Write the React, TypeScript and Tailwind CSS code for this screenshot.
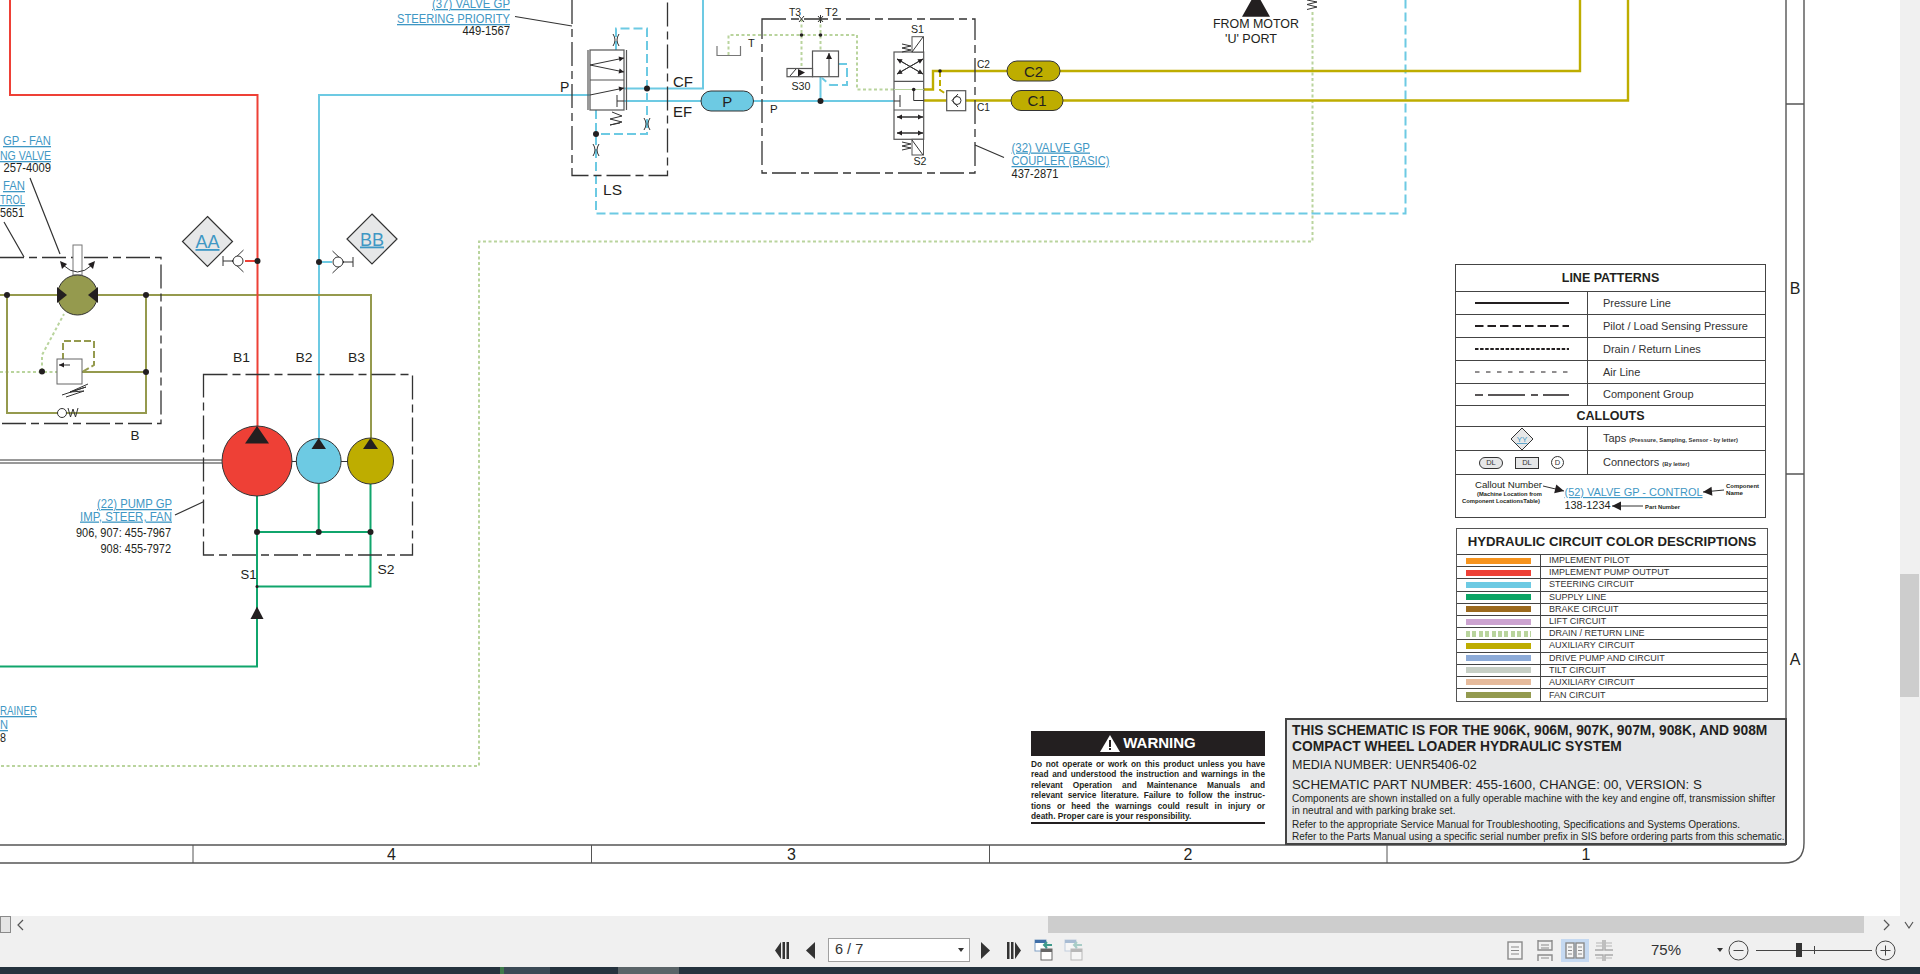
import type { ReactNode } from 'react';

const INK = '#333333';
const RED = '#ee4036';
const BLUE = '#6dcae3';
const GREEN = '#10a56c';
const OLIVE = '#959a4e';
const YELLOW = '#bead00';
const DRAIN = '#b9d49d';
const LINK = '#3f97c4';
const GROUP_DASH = '24 5 8 5';

function T({ x, y, s = 13, w, link, bold, fill, anchor, children }: { x: number; y: number; s?: number; w?: number; link?: boolean; bold?: boolean; fill?: string; anchor?: 'middle' | 'end'; children: ReactNode }) {
  return (
    <text
      x={x}
      y={y}
      fontSize={s}
      textLength={w}
      lengthAdjust={w ? 'spacingAndGlyphs' : undefined}
      textAnchor={anchor}
      fontWeight={bold ? 700 : 400}
      fill={fill ?? (link ? LINK : '#231f20')}
      className={link ? 'underline' : undefined}
    >
      {children}
    </text>
  );
}

function Dot({ x, y, r = 3 }: { x: number; y: number; r?: number }) {
  return <circle cx={x} cy={y} r={r} fill="#231f20" />;
}

function P({ d, c = INK, w = 1, dash }: { d: string; c?: string; w?: number; dash?: string }) {
  return <path d={d} fill="none" stroke={c} strokeWidth={w} strokeDasharray={dash} />;
}

function Arrow({ x1, y1, x2, y2, size = 5 }: { x1: number; y1: number; x2: number; y2: number; size?: number }) {
  const a = Math.atan2(y2 - y1, x2 - x1);
  const h = size * 0.5;
  const bx = x2 - Math.cos(a) * size;
  const by = y2 - Math.sin(a) * size;
  const pts = `${x2},${y2} ${bx - Math.sin(a) * h},${by + Math.cos(a) * h} ${bx + Math.sin(a) * h},${by - Math.cos(a) * h}`;
  return (
    <>
      <line x1={x1} y1={y1} x2={x2} y2={y2} stroke={INK} strokeWidth={1} />
      <polygon points={pts} fill="#231f20" />
    </>
  );
}

function Orifice({ x, y }: { x: number; y: number }) {
  return <P d={`M${x - 3} ${y - 6}Q${x + 1} ${y} ${x - 3} ${y + 6}M${x + 3} ${y - 6}Q${x - 1} ${y} ${x + 3} ${y + 6}`} />;
}

function Pill({ x, y, w, h, fill, label }: { x: number; y: number; w: number; h: number; fill: string; label: string }) {
  return (
    <>
      <rect x={x} y={y} width={w} height={h} rx={h / 2} fill={fill} stroke={INK} strokeWidth={1} />
      <T x={x + w / 2} y={y + h / 2 + 5.5} s={15} anchor="middle">{label}</T>
    </>
  );
}

function Diamond({ x, y, label }: { x: number; y: number; label: string }) {
  return (
    <>
      <polygon points={`${x},${y - 25} ${x + 25},${y} ${x},${y + 25} ${x - 25},${y}`} fill="#e6e7e8" stroke={INK} strokeWidth={1.2} />
      <T x={x} y={y + 6.5} s={18} link anchor="middle">{label}</T>
    </>
  );
}

function Schematic() {
  return (
    <svg className="absolute inset-0 h-full w-full" viewBox="0 0 1900 916">
      {/* sheet frame */}
      <P d="M0 845H1786M0 863H1784Q1804 863 1804 843V0M1786 0V845M1786 104H1804M1786 474H1804" c="#555555" w={1.4} />
      <P d="M193 845V863M591.5 845V863M989.5 845V863M1387 845V863" c="#555555" w={1} />
      <T x={391.5} y={860} s={16} anchor="middle">4</T>
      <T x={791.5} y={860} s={16} anchor="middle">3</T>
      <T x={1188} y={860} s={16} anchor="middle">2</T>
      <T x={1586} y={860} s={16} anchor="middle">1</T>
      <T x={1795} y={294} s={16} anchor="middle">B</T>
      <T x={1795} y={665} s={16} anchor="middle">A</T>

      {/* drain / return */}
      <P d="M1312.5 12V241.5H479V766H0" c={DRAIN} w={2} dash="3 2.5" />
      <P d="M0 372H57M42 371V355L64 314" c={DRAIN} w={2} dash="3 2.5" />
      <P d="M728.5 55V35H857V89.5H894M801.5 19V68M820.5 19V51" c={DRAIN} w={2} dash="3 2.5" />

      {/* steering */}
      <P d="M319 440V95H590" c={BLUE} w={2} />
      <P d="M624 88.5H703V0M617 101H702M753 101H894M820.5 101V77" c={BLUE} w={2} />
      <P d="M616 50V28.5H647V134H596M596 110V213.5H1405.5V0" c={BLUE} w={2} dash="9 4" />
      <P d="M838 64H847V85H830L822 78" c={BLUE} w={2} dash="9 4" />

      {/* fan */}
      <P d="M0 295H371V438M7 295V413H146V295M82 372H146" c={OLIVE} w={2} />
      <P d="M63 360V341H94V365L82 372" c={OLIVE} w={2} dash="7 3" />

      {/* implement */}
      <P d="M10 0V95H257.5V430M245 261H257.5" c={RED} w={2} />

      {/* supply */}
      <P d="M0 666.5H257V496M318.7 483V532M370.5 484V586.5H257M257 532H370.5" c={GREEN} w={2} />

      {/* auxiliary */}
      <P d="M1060 71H1580V0M1063 100.5H1628V0M923.5 100.5H1011M923.5 89.5H933V71H1007" c={YELLOW} w={2.4} />
      <P d="M940 71V90L952 98" c={YELLOW} w={2} dash="6 3" />

      {/* component groups */}
      <P d="M0 257.5H161V423.5H0" w={1.3} dash={GROUP_DASH} />
      <P d="M572 0V175.5H667.5V0" w={1.3} dash={GROUP_DASH} />
      <P d="M762 19H975V173H762Z" w={1.3} dash={GROUP_DASH} />
      <P d="M203.5 374.5H412.5V555H203.5Z" w={1.3} dash={GROUP_DASH} />
      <P d="M30 178L60 254M4 222L24 257M515 16.5L572 26M975 145L1004 157.5M175 515L204 501.5" w={1.2} />

      {/* fan motor */}
      <rect x={73} y={245} width={9} height={30} fill="#ffffff" stroke="#777777" />
      <P d="M63 265Q77.5 279 92 265" />
      <polygon points="60,261 67,264 62,269" fill="#231f20" />
      <polygon points="95,261 88,264 93,269" fill="#231f20" />
      <circle cx={77.5} cy={295} r={20} fill={OLIVE} stroke={INK} />
      <polygon points="57,287 67,295 57,303" fill="#231f20" />
      <polygon points="98,287 88,295 98,303" fill="#231f20" />
      <Dot x={7} y={295} />
      <Dot x={146} y={295} />
      <Dot x={146} y={372} />
      <Dot x={42} y={371.5} />
      <rect x={57} y={359} width={25} height={25} fill="#ffffff" stroke="#666666" />
      <Arrow x1={70} y1={365} x2={59} y2={365} size={5} />
      <P d="M62 395L86 387L70 392L88 384M70 392L84 391L66 397" />
      <circle cx={62} cy={413} r={4.5} fill="#ffffff" stroke={INK} />
      <P d="M68 408L70.5 417L73 409L75.5 417L78 408" />

      {/* taps */}
      <Diamond x={207.5} y={241.5} label="AA" />
      <Diamond x={372} y={239} label="BB" />
      <P d="M223 256V266M223 261H233M243.5 250L232 261L243.5 272" />
      <circle cx={238} cy={261} r={5} fill="#ffffff" stroke={INK} />
      <Dot x={257.5} y={261} />
      <P d="M319 262H332" c={BLUE} w={2} />
      <P d="M353 257V267M343 262H353M332.5 251L344 262L332.5 273" />
      <circle cx={338} cy={262} r={5} fill="#ffffff" stroke={INK} />
      <Dot x={319} y={262} />

      {/* pumps */}
      <P d="M0 460H222M0 463H222M292 461.5H296M341 461.5H348" c={INK} w={1} />
      <circle cx={257} cy={461} r={35} fill={RED} stroke={INK} />
      <polygon points="257,426 269,443.5 245,443.5" fill="#231f20" />
      <circle cx={318.7} cy={461} r={22.4} fill={BLUE} stroke={INK} />
      <polygon points="318.7,438 326,449 311.5,449" fill="#231f20" />
      <circle cx={370.5} cy={461} r={23} fill={YELLOW} stroke={INK} />
      <polygon points="370.5,438 378,449 363,449" fill="#231f20" />
      <Dot x={257} y={532} />
      <Dot x={318.7} y={532} />
      <Dot x={370.5} y={532} />
      <Dot x={257} y={586.5} r={1.5} />
      <polygon points="257,606.5 263.5,619 250.5,619" fill="#231f20" />

      {/* steering priority valve */}
      <rect x={590} y={50} width={34} height={60} fill="#ffffff" stroke="#555555" strokeWidth={1.2} />
      <P d="M588 50V110M626.5 50V110M590 80H624" c="#555555" w={1.2} />
      <Arrow x1={590} y1={65} x2={624} y2={58} />
      <Arrow x1={590} y1={65} x2={624} y2={72} />
      <Arrow x1={590} y1={95} x2={624} y2={88} />
      <P d="M617 95V107M617 101H624" />
      <P d="M612 112L622 116L610 119L622 122L610 125L620 123" />
      <Orifice x={616} y={40} />
      <Orifice x={647} y={124} />
      <Orifice x={596} y={150} />
      <Dot x={647} y={88.5} />
      <Dot x={596} y={134} />

      {/* coupler valve */}
      <P d="M717 46V55.5H740.5V46" c="#777777" w={1.2} />
      <T x={748} y={46.5} s={11}>T</T>
      <P d="M799 16L804 22M804 16L799 22M818 16L823 22M823 16L818 22M820.5 15V23" />
      <Dot x={801.5} y={35} r={1.8} />
      <Dot x={820.5} y={35} r={1.8} />
      <rect x={812.5} y={51} width={26} height={25.7} fill="#ffffff" stroke="#555555" strokeWidth={1.2} />
      <Arrow x1={829} y1={76} x2={829} y2={53} size={6} />
      <rect x={787} y={68.5} width={25.5} height={8.2} fill="#ffffff" stroke="#555555" strokeWidth={1.2} />
      <P d="M790 76L796 69" />
      <polygon points="798,69 805,72.5 798,76.5" fill="#231f20" />
      <Dot x={820.5} y={101} />
      <rect x={894} y={52} width={29.7} height={87.3} fill="#ffffff" stroke="#555555" strokeWidth={1.2} />
      <P d="M894 81.3H923.7M894 110H923.7" c="#555555" w={1.2} />
      <Arrow x1={897} y1={59} x2={923} y2={74} />
      <Arrow x1={923} y1={74} x2={897} y2={59} />
      <Arrow x1={923} y1={59} x2={897} y2={74} />
      <Arrow x1={897} y1={74} x2={923} y2={59} />
      <Arrow x1={897} y1={117} x2={923} y2={117} />
      <Arrow x1={923} y1={117} x2={897} y2={117} />
      <Arrow x1={897} y1={133} x2={923} y2={133} />
      <Arrow x1={923} y1={133} x2={897} y2={133} />
      <P d="M894 101H900M900 95V107M913.7 89.5V100.5H923.7" />
      <P d="M894 89.5H923.7" c={DRAIN} w={1} />
      <Dot x={913.7} y={89.5} r={1.8} />
      <rect x={912} y={36.7} width={11.5} height={15.3} fill="#ffffff" stroke="#555555" />
      <rect x={912} y={139.3} width={11.5} height={15.7} fill="#ffffff" stroke="#555555" />
      <P d="M912 52L923 37M912 140L923 155" />
      <P d="M902 44L911 46L902 48L911 50L902 52M902 142L911 144L902 146L911 148L902 150" />
      <rect x={946.7} y={90.7} width={19} height={20} fill="#ffffff" stroke="#555555" strokeWidth={1.2} />
      <circle cx={957} cy={100.5} r={4} fill="#ffffff" stroke={INK} />
      <P d="M958 94L952 100.5L958 107" />
      <Dot x={940} y={71} r={1.8} />

      <Pill x={701} y={91} w={52.5} h={20} fill={BLUE} label="P" />
      <Pill x={1007} y={61} w={53} h={20} fill={YELLOW} label="C2" />
      <Pill x={1011} y={90.5} w={52} h={20} fill={YELLOW} label="C1" />

      {/* labels */}
      <T x={560} y={92} s={14}>P</T>
      <T x={673} y={87} s={14.5} w={20}>CF</T>
      <T x={673} y={117} s={14.5} w={19}>EF</T>
      <T x={603} y={195} s={14} w={19}>LS</T>
      <T x={789} y={16} s={11.5} w={12}>T3</T>
      <T x={825} y={16} s={11.5} w={13}>T2</T>
      <T x={791.5} y={90} s={11.5} w={19}>S30</T>
      <T x={770} y={113} s={11.5}>P</T>
      <T x={911} y={33} s={11.5} w={13}>S1</T>
      <T x={913.5} y={165} s={11.5} w={13}>S2</T>
      <T x={977} y={68} s={11.5} w={13}>C2</T>
      <T x={977} y={110.5} s={11.5} w={13}>C1</T>
      <T x={233} y={361.5} s={13.5} w={17}>B1</T>
      <T x={295.5} y={361.5} s={13.5} w={17}>B2</T>
      <T x={348} y={361.5} s={13.5} w={17}>B3</T>
      <T x={130.5} y={440} s={13.5}>B</T>
      <T x={240.5} y={579} s={13.5} w={16}>S1</T>
      <T x={377.5} y={574} s={13.5} w={17}>S2</T>

      {/* from motor */}
      <polygon points="1256,-8 1270,16.7 1242,16.7" fill="#231f20" />
      <T x={1213} y={27.5} s={13} w={86}>FROM MOTOR</T>
      <T x={1225} y={42.5} s={13} w={52}>'U' PORT</T>
      <P d="M1307 0L1317 2L1307 4.5L1317 7L1307 9.5" />

      {/* callouts */}
      <T x={432} y={8} s={13} w={78} link>(37) VALVE GP</T>
      <T x={397} y={23} s={13} w={113} link>STEERING PRIORITY</T>
      <T x={462.5} y={35} s={13.5} w={47.5}>449-1567</T>
      <T x={1011.5} y={151.5} s={13} w={78.5} link>(32) VALVE GP</T>
      <T x={1011.5} y={165} s={13} w={98} link>COUPLER (BASIC)</T>
      <T x={1011.5} y={178} s={13.5} w={47}>437-2871</T>
      <T x={3} y={145} s={13} w={48} link>GP - FAN</T>
      <T x={0} y={160} s={13} w={51} link>NG VALVE</T>
      <T x={3.5} y={172} s={13.5} w={47.5}>257-4009</T>
      <T x={3} y={190} s={13} w={22} link>FAN</T>
      <T x={0} y={204} s={13} w={25} link>TROL</T>
      <T x={0} y={217} s={13.5} w={24}>5651</T>
      <T x={97} y={508} s={13} w={75} link>(22) PUMP GP</T>
      <T x={80} y={520.5} s={13} w={92} link>IMP, STEER, FAN</T>
      <T x={76} y={537} s={13.5} w={95}>906, 907: 455-7967</T>
      <T x={100.5} y={552.5} s={13.5} w={70.5}>908: 455-7972</T>
      <T x={0} y={715} s={13} w={37} link>RAINER</T>
      <T x={0} y={729} s={13} w={8} link>N</T>
      <T x={0} y={741.5} s={13.5} w={6}>8</T>
    </svg>
  );
}

function Sample({ dash, w = 1 }: { dash?: string; w?: number }) {
  return (
    <svg width="94" height="4" className="block">
      <line x1="0" y1="2" x2="94" y2="2" stroke="#231f20" strokeWidth={w} strokeDasharray={dash} />
    </svg>
  );
}

function PatternRow({ h, dash, w, label }: { h: string; dash?: string; w: number; label: string }) {
  return (
    <div className={`flex ${h} items-center border-b border-[#444444]`}>
      <div className="flex h-full w-[132px] items-center justify-center border-r border-[#444444]">
        <Sample dash={dash} w={w} />
      </div>
      <span className="pl-[15px] text-[11px] text-[#333333]">{label}</span>
    </div>
  );
}

function LinePatterns() {
  return (
    <div className="absolute left-[1455px] top-[264px] w-[311px] border border-[#444444] bg-white">
      <div className="flex h-[27px] items-center justify-center border-b border-[#444444] text-[12.5px] font-bold text-[#231f20]">LINE PATTERNS</div>
      <PatternRow h="h-[23px]" w={2} label="Pressure Line" />
      <PatternRow h="h-[23px]" dash="8.5 4" w={2} label="Pilot / Load Sensing Pressure" />
      <PatternRow h="h-[23px]" dash="3.5 1.6" w={2} label="Drain / Return Lines" />
      <PatternRow h="h-[23px]" dash="4.5 6.5" w={1} label="Air Line" />
      <PatternRow h="h-[22px]" dash="8 5 37 6 7 5 26" w={1.3} label="Component Group" />
      <div className="flex h-[21px] items-center justify-center border-b border-[#444444] text-[12.5px] font-bold text-[#231f20]">CALLOUTS</div>
      <div className="flex h-[24px] items-center border-b border-[#444444]">
        <div className="flex h-full w-[132px] items-center justify-center border-r border-[#444444]">
          <svg width="24" height="24" viewBox="0 0 24 24">
            <polygon points="12,1 23,12 12,23 1,12" fill="#e6e7e8" stroke="#333333" />
            <text x="12" y="15" fontSize="8" textAnchor="middle" fill={LINK} className="underline">YY</text>
          </svg>
        </div>
        <span className="pl-[15px] text-[11px] text-[#333333]">Taps <span className="text-[5.8px] font-bold">(Pressure, Sampling, Sensor - by letter)</span></span>
      </div>
      <div className="flex h-[24px] items-center border-b border-[#444444]">
        <div className="flex h-full w-[132px] items-center gap-[12px] border-r border-[#444444] pl-[23px] text-[7.5px] text-[#333333]">
          <span className="flex h-[12px] w-[24px] items-center justify-center rounded-full border border-[#333333] bg-[#e6e7e8]">DL</span>
          <span className="flex h-[12px] w-[24px] items-center justify-center border border-[#333333] bg-[#e6e7e8]">DL</span>
          <span className="flex h-[13px] w-[13px] items-center justify-center rounded-full border border-[#333333]">D</span>
        </div>
        <span className="pl-[15px] text-[11px] text-[#333333]">Connectors <span className="text-[5.8px] font-bold">(By letter)</span></span>
      </div>
      <svg className="block" width="309" height="42" viewBox="1456 476 309 42">
        <T x={1475} y={489} s={9.5} w={67}>Callout Number</T>
        <T x={1477} y={497} s={5.4} bold w={65}>(Machine Location from</T>
        <T x={1462} y={504} s={5.4} bold w={78}>Component LocationsTable)</T>
        <T x={1564.5} y={497} s={11.5} w={138} link>(52) VALVE GP - CONTROL</T>
        <T x={1564.5} y={510} s={11} w={46}>138-1234</T>
        <T x={1726} y={489} s={5.4} bold w={33}>Component</T>
        <T x={1726} y={496} s={5.4} bold w={17}>Name</T>
        <T x={1645} y={510} s={5.4} bold w={35}>Part Number</T>
        <Arrow x1={1543} y1={487} x2={1564} y2={492} size={9} />
        <Arrow x1={1724} y1={491} x2={1703} y2={493} size={9} />
        <Arrow x1={1643} y1={507} x2={1612} y2={507} size={9} />
      </svg>
    </div>
  );
}

const CIRCUITS = [
  { label: 'IMPLEMENT PILOT', swatch: 'bg-[#f7941d]' },
  { label: 'IMPLEMENT PUMP OUTPUT', swatch: 'bg-[#ee4036]' },
  { label: 'STEERING CIRCUIT', swatch: 'bg-[#6dcae3]' },
  { label: 'SUPPLY LINE', swatch: 'bg-[#0ca566]' },
  { label: 'BRAKE CIRCUIT', swatch: 'bg-[#9c6a1e]' },
  { label: 'LIFT CIRCUIT', swatch: 'bg-[#cca3d0]' },
  { label: 'DRAIN / RETURN LINE', swatch: 'bg-[repeating-linear-gradient(90deg,#b9d49d_0,#b9d49d_4px,#ffffff_4px,#ffffff_6.4px)]' },
  { label: 'AUXILIARY CIRCUIT', swatch: 'bg-[#bead00]' },
  { label: 'DRIVE PUMP AND CIRCUIT', swatch: 'bg-[#8dabd8]' },
  { label: 'TILT CIRCUIT', swatch: 'bg-[#c7cfc5]' },
  { label: 'AUXILIARY CIRCUIT', swatch: 'bg-[#e6bb9c]' },
  { label: 'FAN CIRCUIT', swatch: 'bg-[#939a4f]' },
];

function CircuitColors() {
  return (
    <div className="absolute left-[1456px] top-[528px] w-[312px] border border-[#555555] bg-white">
      <div className="flex h-[26px] items-center justify-center border-b border-[#444444] text-[13.2px] font-bold text-[#231f20]">HYDRAULIC CIRCUIT COLOR DESCRIPTIONS</div>
      {CIRCUITS.map((c) => (
        <div key={c.label + c.swatch} className="flex h-[12.2px] items-center border-b border-[#444444] last:border-b-0">
          <div className="flex h-full w-[84px] items-center border-r border-[#444444] pl-[9px]">
            <div className={`h-[6px] w-[65px] ${c.swatch}`} />
          </div>
          <span className="pl-[8px] text-[9px] leading-none text-[#333333]">{c.label}</span>
        </div>
      ))}
    </div>
  );
}

function Warning() {
  const lines = [
    'Do not operate or work on this product unless you have',
    'read and understood the instruction and warnings in the',
    'relevant Operation and Maintenance Manuals and',
    'relevant service literature. Failure to follow the instruc-',
    'tions or heed the warnings could result in injury or',
  ];
  return (
    <div className="absolute left-[1031px] top-[731px] w-[234px] border-b-2 border-[#231f20] pb-[1px]">
      <div className="mb-[3px] flex h-[25px] items-center justify-center gap-[3px] bg-[#231f20] text-[15px] font-bold text-white">
        <svg width="20" height="17" viewBox="0 0 20 17">
          <polygon points="10,0 20,17 0,17" fill="#ffffff" />
          <rect x="9" y="5" width="2" height="7" fill="#231f20" />
          <rect x="9" y="13" width="2" height="2" fill="#231f20" />
        </svg>
        WARNING
      </div>
      {lines.map((l) => (
        <div key={l} className="text-justify text-[8.3px] font-bold leading-[10.4px] text-[#231f20] [text-align-last:justify]">{l}</div>
      ))}
      <div className="text-[8.3px] font-bold leading-[10.4px] text-[#231f20]">death. Proper care is your responsibility.</div>
    </div>
  );
}

function TitleBlock() {
  return (
    <div className="absolute left-[1285px] top-[718px] h-[127px] w-[502px] border-2 border-[#444444] bg-[#e6e7e8] pl-[5px] pt-[3px] text-[#231f20]">
      <div className="whitespace-nowrap text-[13.8px] font-bold leading-[16px]">THIS SCHEMATIC IS FOR THE 906K, 906M, 907K, 907M, 908K, AND 908M</div>
      <div className="whitespace-nowrap text-[13.8px] font-bold leading-[16px]">COMPACT WHEEL LOADER HYDRAULIC SYSTEM</div>
      <div className="mt-[1px] text-[12.5px] leading-[18px]">MEDIA NUMBER: UENR5406-02</div>
      <div className="mt-[1px] whitespace-nowrap text-[13.3px] leading-[20px]">SCHEMATIC PART NUMBER: 455-1600, CHANGE: 00, VERSION: S</div>
      <div className="-mt-[2px] whitespace-nowrap text-[10px] leading-[12px]">Components are shown installed on a fully operable machine with the key and engine off, transmission shifter</div>
      <div className="text-[10px] leading-[12px]">in neutral and with parking brake set.</div>
      <div className="mt-[2px] whitespace-nowrap text-[10px] leading-[12px]">Refer to the appropriate Service Manual for Troubleshooting, Specifications and Systems Operations.</div>
      <div className="whitespace-nowrap text-[10px] leading-[12px]">Refer to the Parts Manual using a specific serial number prefix in SIS before ordering parts from this schematic.</div>
    </div>
  );
}

function Chevron({ dir }: { dir: 'left' | 'right' | 'down' }) {
  const d = dir === 'left' ? 'M7 1L2 6L7 11' : dir === 'right' ? 'M2 1L7 6L2 11' : 'M1 3L5 9L9 3';
  return (
    <svg width="10" height="12" viewBox="0 0 10 12">
      <path d={d} fill="none" stroke="#555555" strokeWidth="1.2" />
    </svg>
  );
}

function NavIcon({ kind }: { kind: 'first' | 'prev' | 'next' | 'last' }) {
  const shape = {
    first: 'M0 8.5L6 0V17ZM7.5 0H10V17H7.5ZM11.5 0H14V17H11.5Z',
    prev: 'M0 8.5L9 0V17Z',
    next: 'M9 8.5L0 0V17Z',
    last: 'M0 0H2.5V17H0ZM4 0H6.5V17H4ZM14 8.5L8 0V17Z',
  }[kind];
  return (
    <svg width={kind === 'first' || kind === 'last' ? 14 : 9} height="17" viewBox={kind === 'first' || kind === 'last' ? '0 0 14 17' : '0 0 9 17'}>
      <path d={shape} fill="#333333" />
    </svg>
  );
}

function SwapIcon({ muted }: { muted?: boolean }) {
  return (
    <svg width="20" height="22" viewBox="0 0 20 22" className={muted ? 'opacity-40' : ''}>
      <rect x="1" y="1" width="11" height="11" fill="#ffffff" stroke="#7f9fc4" />
      <rect x="1" y="1" width="11" height="3" fill="#3f6fa8" />
      <rect x="7" y="10" width="11" height="11" fill="#ffffff" stroke="#666666" />
      <rect x="7" y="10" width="11" height="3" fill="#666666" />
      <path d="M18 6H10M13 3L10 6L13 9" fill="none" stroke="#3f9b8c" strokeWidth="2" />
    </svg>
  );
}

function PageIcon({ kind }: { kind: 'single' | 'scroll' | 'double' | 'cont' }) {
  const s = '#8a8a8a';
  if (kind === 'single') {
    return (
      <svg width="16" height="19" viewBox="0 0 16 19">
        <rect x="1" y="1" width="14" height="17" fill="#f4f4f4" stroke={s} strokeWidth="1.4" />
        <path d="M4 6H12M4 9.5H12M4 13H12" stroke={s} />
      </svg>
    );
  }
  if (kind === 'scroll') {
    return (
      <svg width="16" height="21" viewBox="0 0 16 21">
        <path d="M1 0V10H15V0M1 21V15H15V21M1 1H15" fill="none" stroke={s} strokeWidth="1.4" />
        <path d="M4 5H12M4 8H12M4 18H12" stroke={s} />
      </svg>
    );
  }
  if (kind === 'double') {
    return (
      <span className="flex h-[23px] w-[28px] items-center justify-center bg-[#c5d9f1]">
        <svg width="20" height="17" viewBox="0 0 20 17">
          <rect x="1" y="1" width="8" height="15" fill="#f4f4f4" stroke={s} strokeWidth="1.4" />
          <rect x="11" y="1" width="8" height="15" fill="#f4f4f4" stroke={s} strokeWidth="1.4" />
          <path d="M3 5H7M3 8.5H7M3 12H7M13 5H17M13 8.5H17M13 12H17" stroke={s} />
        </svg>
      </span>
    );
  }
  return (
    <svg width="20" height="21" viewBox="0 0 20 21">
      <path d="M1 10H9V0M11 0V10H19M1 15H9V21M11 21V15H19" fill="none" stroke="#a9a9a9" strokeWidth="1.4" />
      <path d="M2 3H8M2 6H8M12 3H18M12 6H18M2 18H8M12 18H18" stroke="#b5b5b5" />
    </svg>
  );
}

function ZoomButton({ plus }: { plus?: boolean }) {
  return (
    <svg width="21" height="21" viewBox="0 0 21 21">
      <circle cx="10.5" cy="10.5" r="9.5" fill="none" stroke="#444444" />
      <path d={plus ? 'M5.5 10.5H15.5M10.5 5.5V15.5' : 'M5.5 10.5H15.5'} stroke="#444444" />
    </svg>
  );
}

export default function App() {
  return (
    <div className="flex h-screen w-screen flex-col overflow-hidden bg-white font-['Liberation_Sans',Arial,sans-serif]">
      <div className="flex h-[916px] shrink-0">
        <div className="relative w-[1900px] shrink-0 overflow-hidden bg-white">
          <Schematic />
          <LinePatterns />
          <CircuitColors />
          <Warning />
          <TitleBlock />
        </div>
        <div className="flex-1 bg-[#f0f0f0] pt-[574px]">
          <div className="h-[123px] w-[19px] bg-[#cdcdcd]" />
        </div>
      </div>

      {/* horizontal scrollbar */}
      <div className="flex h-[17px] shrink-0 items-center bg-[#f0f0f0]">
        <div className="h-full w-[11px] border border-[#8a8a8a] bg-[#e4e4e4]" />
        <div className="ml-[5px]"><Chevron dir="left" /></div>
        <div className="ml-[1022px] h-full w-[816px] bg-[#cdcdcd]" />
        <div className="ml-[18px]"><Chevron dir="right" /></div>
        <div className="ml-[12px]"><Chevron dir="down" /></div>
      </div>

      {/* toolbar */}
      <div className="flex h-[34px] shrink-0 items-center bg-[#f0f0f0] text-[#333333]">
        <div className="ml-[775px]"><NavIcon kind="first" /></div>
        <div className="ml-[17px]"><NavIcon kind="prev" /></div>
        <div className="ml-[13px] flex h-[24px] w-[142px] items-center justify-between border border-[#a0a0a0] bg-white pl-[6px] pr-[5px] text-[14.5px]">
          <span>6 / 7</span>
          <svg width="6" height="4" viewBox="0 0 6 4"><path d="M0 0H6L3 4Z" fill="#333333" /></svg>
        </div>
        <div className="ml-[11px]"><NavIcon kind="next" /></div>
        <div className="ml-[17px]"><NavIcon kind="last" /></div>
        <div className="ml-[13px]"><SwapIcon /></div>
        <div className="ml-[10px]"><SwapIcon muted /></div>
        <div className="ml-[423px]"><PageIcon kind="single" /></div>
        <div className="ml-[14px]"><PageIcon kind="scroll" /></div>
        <div className="ml-[8px]"><PageIcon kind="double" /></div>
        <div className="ml-[5px]"><PageIcon kind="cont" /></div>
        <span className="ml-[37px] w-[31px] text-[15px]">75%</span>
        <svg className="ml-[35px]" width="6" height="4" viewBox="0 0 6 4"><path d="M0 0H6L3 4Z" fill="#333333" /></svg>
        <div className="ml-[5px]"><ZoomButton /></div>
        <div className="relative ml-[7px] h-[14px] w-[116px]">
          <div className="absolute left-0 right-0 top-[6.5px] h-px bg-[#444444]" />
          <div className="absolute left-[40px] top-0 h-[14px] w-[6px] bg-[#333333]" />
          <div className="absolute left-[58px] top-[3px] h-[8px] w-px bg-[#444444]" />
        </div>
        <div className="ml-[3px]"><ZoomButton plus /></div>
      </div>

      {/* taskbar sliver */}
      <div className="flex h-[7px] shrink-0 bg-[#25333e]">
        <div className="ml-[500px] w-[4px] bg-[#3f7a4b]" />
        <div className="w-[46px] bg-[#3b4a56]" />
        <div className="ml-[68px] w-[61px] bg-[#5a6468]" />
      </div>
    </div>
  );
}
